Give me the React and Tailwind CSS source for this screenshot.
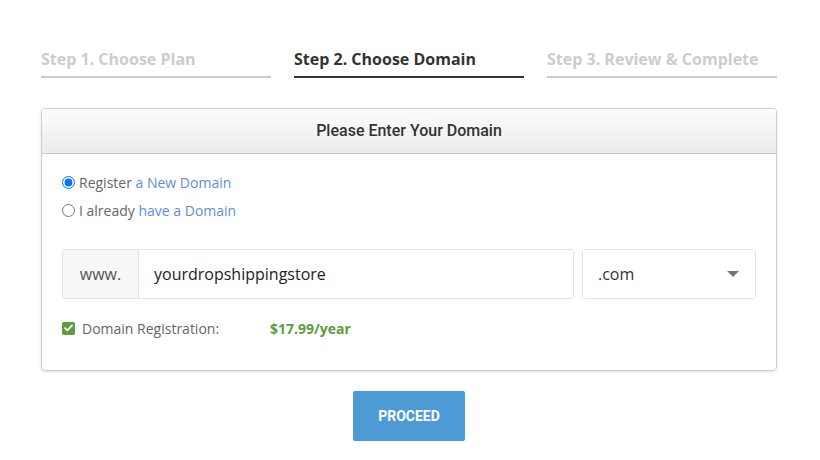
import { useState } from 'react';

const steps = [
    { label: 'Step 1. Choose Plan', active: false },
    { label: 'Step 2. Choose Domain', active: true },
    { label: 'Step 3. Review & Complete', active: false },
];

const App = () => {
    const [mode, setMode] = useState('new');
    const [domain, setDomain] = useState('yourdropshippingstore');
    const [tld, setTld] = useState('.com');

    return (
        <div className="w-[820px] h-[460px] bg-white pl-[41px] pr-[43px] pt-[47px]" style={{ fontFamily: '"Open Sans", sans-serif' }}>
            {/* Steps */}
            <div className="flex gap-[23px]">
                {steps.map((step) => (
                    <div
                        key={step.label}
                        className={`flex-1 pb-[5px] border-b-2 text-[16px] font-bold leading-[24px] ${
                            step.active ? 'border-[#333] text-[#333]' : 'border-[#cccccc] text-[#cccccc]'
                        }`}
                    >
                        {step.label}
                    </div>
                ))}
            </div>

            {/* Card */}
            <div className="mt-[30px] border border-[#cfcfcf] rounded-[4px] shadow-[0_1px_3px_rgba(0,0,0,0.12)] overflow-hidden">
                <div
                    className="h-[45px] flex items-center justify-center border-b border-[#c8c8c8] bg-gradient-to-b from-[#fdfdfd] to-[#ebebeb] text-[16px] font-medium text-[#333]"
                    style={{ fontFamily: 'Roboto, sans-serif' }}
                >
                    Please Enter Your Domain
                </div>

                <div className="px-[20px] pt-[14px] pb-[32px]">
                    <label className="flex items-center h-[28px] text-[14px] text-[#666] cursor-pointer">
                        <input
                            type="radio"
                            name="mode"
                            checked={mode === 'new'}
                            onChange={() => setMode('new')}
                            className="m-0 mr-[4px] w-[13px] h-[13px]"
                        />
                        Register&nbsp;<span className="text-[#5f8dd6]">a New Domain</span>
                    </label>
                    <label className="flex items-center h-[28px] text-[14px] text-[#666] cursor-pointer">
                        <input
                            type="radio"
                            name="mode"
                            checked={mode === 'existing'}
                            onChange={() => setMode('existing')}
                            className="m-0 mr-[4px] w-[13px] h-[13px]"
                        />
                        I already&nbsp;<span className="text-[#5f8dd6]">have a Domain</span>
                    </label>

                    <div className="mt-[25px] flex gap-[8px] h-[50px]">
                        <div className="flex flex-1 border border-[#e3e3e3] rounded-[3px] overflow-hidden">
                            <div className="w-[76px] flex items-center justify-center bg-[#f7f7f7] border-r border-[#e3e3e3] text-[16px] text-[#555]">
                                www.
                            </div>
                            <input
                                type="text"
                                value={domain}
                                onChange={(e) => setDomain(e.target.value)}
                                className="flex-1 px-[15px] text-[16px] text-[#222] outline-none bg-white"
                            />
                        </div>
                        <div className="relative w-[174px] border border-[#e3e3e3] rounded-[3px]">
                            <select
                                value={tld}
                                onChange={(e) => setTld(e.target.value)}
                                className="appearance-none w-full h-full px-[15px] text-[16px] text-[#333] bg-white outline-none"
                            >
                                <option value=".com">.com</option>
                                <option value=".net">.net</option>
                                <option value=".org">.org</option>
                                <option value=".store">.store</option>
                            </select>
                            <svg
                                className="absolute right-[16px] top-[21px] pointer-events-none"
                                width="12"
                                height="6"
                                viewBox="0 0 12 6"
                            >
                                <path d="M0 0 L12 0 L6 6 Z" fill="#777" />
                            </svg>
                        </div>
                    </div>

                    <div className="mt-[19px] flex items-center h-[20px] text-[14px] text-[#666]">
                        <span className="w-[13px] h-[13px] rounded-[2px] bg-[#5a9e3d] flex items-center justify-center mr-[7px]">
                            <svg width="9" height="8" viewBox="0 0 9 8">
                                <path d="M1 4.2 L3.4 6.4 L8 1.4" stroke="#fff" strokeWidth="1.8" fill="none" strokeLinecap="round" strokeLinejoin="round" />
                            </svg>
                        </span>
                        <span className="w-[188px]">Domain Registration:</span>
                        <span className="font-bold text-[#5a9e3d]">$17.99/year</span>
                    </div>
                </div>
            </div>

            <div className="mt-[20px] flex justify-center">
                <button
                    className="w-[112px] h-[50px] rounded-[2px] bg-[#4e9ad4] text-white text-[14px] font-bold"
                    style={{ fontFamily: 'Roboto, sans-serif' }}
                >
                    PROCEED
                </button>
            </div>
        </div>
    );
};

export default App;
